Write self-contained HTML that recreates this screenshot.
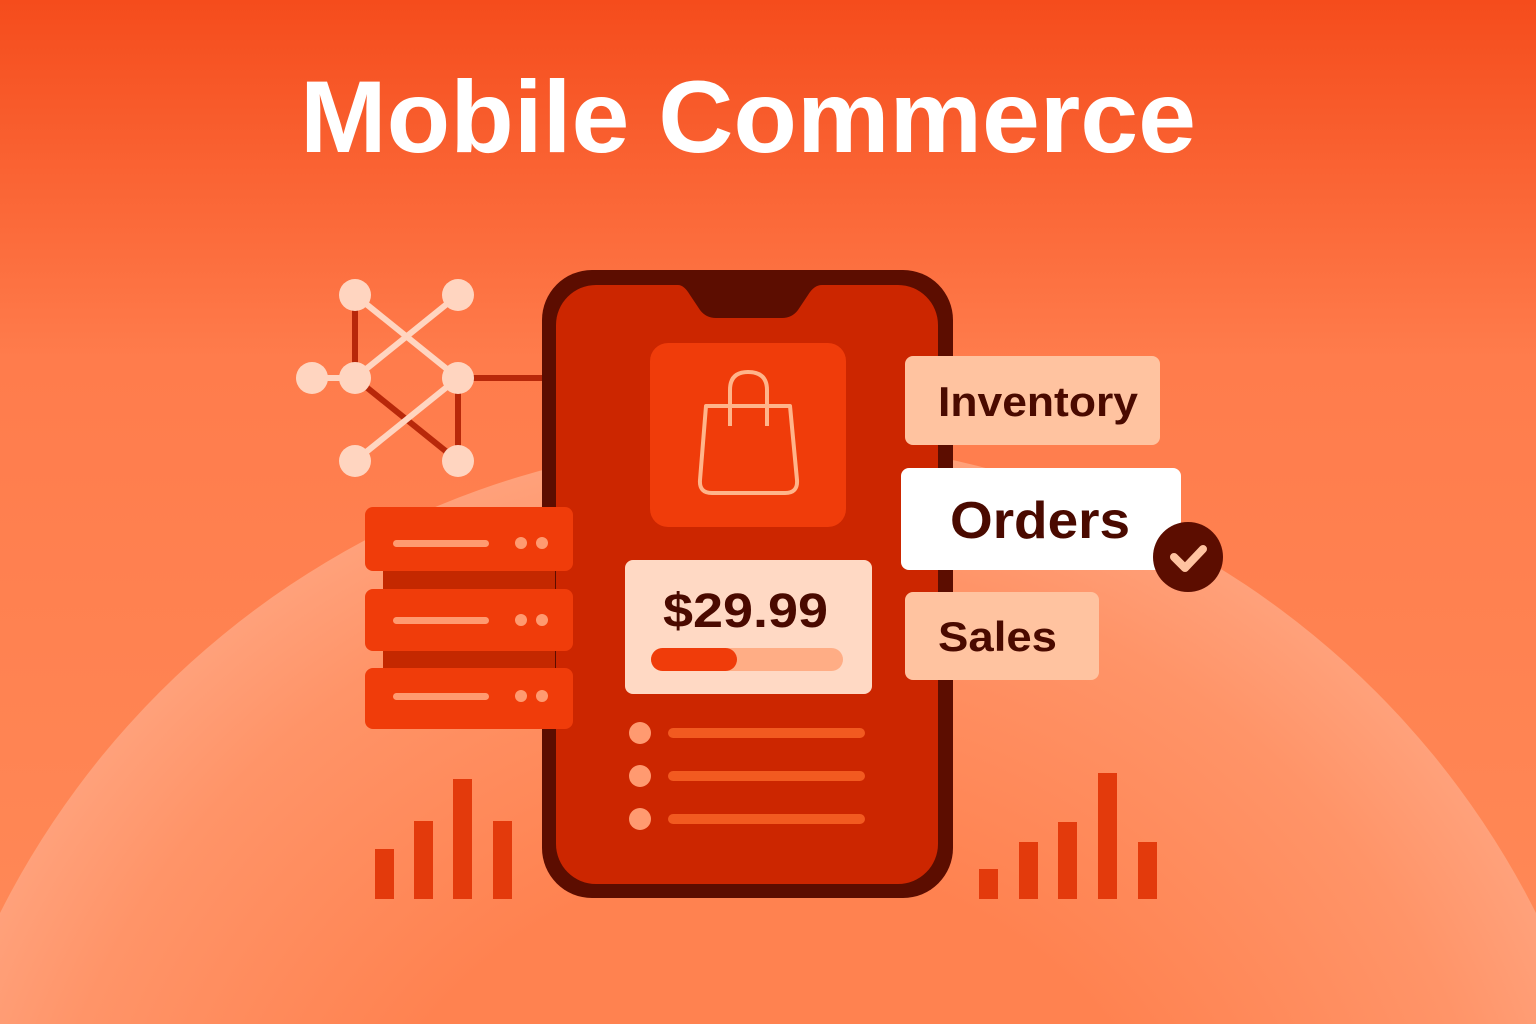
<!DOCTYPE html>
<html><head><meta charset="utf-8"><style>html,body{margin:0;padding:0;overflow:hidden;width:1536px;height:1024px}svg{display:block}</style></head>
<body>
<svg width="1536" height="1024" viewBox="0 0 1536 1024" xmlns="http://www.w3.org/2000/svg" font-family="Liberation Sans, sans-serif">
<defs>
<linearGradient id="bg" x1="0" y1="0" x2="0" y2="1">
<stop offset="0" stop-color="#f54c1c"/><stop offset="0.35" stop-color="#ff7c4c"/><stop offset="1" stop-color="#ff8a58"/>
</linearGradient>
<radialGradient id="arc" cx="768" cy="1300" r="870" gradientUnits="userSpaceOnUse">
<stop offset="0.5" stop-color="#ff8250"/><stop offset="0.85" stop-color="#ff9468"/><stop offset="1" stop-color="#ffa27c"/>
</radialGradient>
</defs>
<rect width="1536" height="1024" fill="url(#bg)"/>
<ellipse cx="768" cy="1300" rx="860" ry="860" fill="url(#arc)"/>
<text x="300" y="152" textLength="896" lengthAdjust="spacingAndGlyphs" font-size="102" font-weight="bold" fill="#fff">Mobile Commerce</text>

<!-- network -->
<g stroke-width="6">
<line x1="355" y1="295" x2="355" y2="378" stroke="#b8280a"/>
<line x1="355" y1="378" x2="458" y2="461" stroke="#b8280a"/>
<line x1="458" y1="378" x2="458" y2="461" stroke="#b8280a"/>
<line x1="458" y1="378" x2="545" y2="378" stroke="#b8280a"/>
<line x1="355" y1="295" x2="458" y2="378" stroke="#ffd5c0"/>
<line x1="458" y1="295" x2="355" y2="378" stroke="#ffd5c0"/>
<line x1="458" y1="378" x2="355" y2="461" stroke="#ffd5c0"/>
<line x1="312" y1="378" x2="355" y2="378" stroke="#ffd5c0"/>
</g>
<g fill="#ffd5c0">
<circle cx="355" cy="295" r="16"/><circle cx="458" cy="295" r="16"/><circle cx="312" cy="378" r="16"/><circle cx="355" cy="378" r="16"/><circle cx="458" cy="378" r="16"/><circle cx="355" cy="461" r="16"/><circle cx="458" cy="461" r="16"/>
</g>

<!-- phone -->
<rect x="542" y="270" width="411" height="628" rx="50" fill="#5c0d00"/>
<rect x="556" y="285" width="382" height="599" rx="40" fill="#cc2600"/>
<path d="M665 285 L678 285 Q684 285 690 295 L700 310 Q706 318 716 318 L782 318 Q792 318 798 310 L808 295 Q814 285 822 285 L835 285 Z" fill="#5c0d00"/>
<rect x="650" y="343" width="196" height="184" rx="18" fill="#f03c0a"/>
<g fill="none" stroke="#ffb48a" stroke-width="4" stroke-linejoin="round">
<path d="M706 406 L790 406 L797 480 Q798 493 785 493 L712 493 Q699 493 700 480 Z"/>
<path d="M730 426 L730 390 Q730 372 748 372 Q767 372 767 390 L767 426"/>
</g>
<rect x="625" y="560" width="247" height="134" rx="8" fill="#ffd9c4"/>
<text x="663" y="627" textLength="165" lengthAdjust="spacingAndGlyphs" font-size="48" font-weight="bold" fill="#4a0a00">$29.99</text>
<rect x="651" y="648" width="192" height="23" rx="11.5" fill="#ffad85"/>
<rect x="651" y="648" width="86" height="23" rx="11.5" fill="#f03c0a"/>
<g fill="#ff9a70"><circle cx="640" cy="733" r="11"/><circle cx="640" cy="776" r="11"/><circle cx="640" cy="819" r="11"/></g>
<g fill="#f25a20"><rect x="668" y="728" width="197" height="10" rx="5"/><rect x="668" y="771" width="197" height="10" rx="5"/><rect x="668" y="814" width="197" height="10" rx="5"/></g>

<!-- servers -->
<rect x="383" y="565" width="172" height="110" fill="#c42800"/>
<g fill="#f03c0a"><rect x="365" y="507" width="208" height="64" rx="8"/><rect x="365" y="589" width="208" height="62" rx="8"/><rect x="365" y="668" width="208" height="61" rx="8"/></g>
<g fill="#ff9a70">
<rect x="393" y="540" width="96" height="7" rx="3.5"/><circle cx="521" cy="543" r="6"/><circle cx="542" cy="543" r="6"/>
<rect x="393" y="617" width="96" height="7" rx="3.5"/><circle cx="521" cy="620" r="6"/><circle cx="542" cy="620" r="6"/>
<rect x="393" y="693" width="96" height="7" rx="3.5"/><circle cx="521" cy="696" r="6"/><circle cx="542" cy="696" r="6"/>
</g>

<!-- labels -->
<rect x="905" y="356" width="255" height="89" rx="8" fill="#ffc3a0"/>
<text x="938" y="416" textLength="200" lengthAdjust="spacingAndGlyphs" font-size="42" font-weight="bold" fill="#4a0a00">Inventory</text>
<rect x="901" y="468" width="280" height="102" rx="8" fill="#fff"/>
<text x="950" y="538" textLength="180" lengthAdjust="spacingAndGlyphs" font-size="52" font-weight="bold" fill="#4a0a00">Orders</text>
<circle cx="1188" cy="557" r="35" fill="#5c0d00"/>
<path d="M1174 557 L1185 568 L1203 549" fill="none" stroke="#ffc3a0" stroke-width="8" stroke-linecap="round" stroke-linejoin="round"/>
<rect x="905" y="592" width="194" height="88" rx="8" fill="#ffc3a0"/>
<text x="938" y="651" textLength="119" lengthAdjust="spacingAndGlyphs" font-size="42" font-weight="bold" fill="#4a0a00">Sales</text>

<!-- bars -->
<g fill="#e33a0c">
<rect x="375" y="849" width="19" height="50"/><rect x="414" y="821" width="19" height="78"/><rect x="453" y="779" width="19" height="120"/><rect x="493" y="821" width="19" height="78"/>
<rect x="979" y="869" width="19" height="30"/><rect x="1019" y="842" width="19" height="57"/><rect x="1058" y="822" width="19" height="77"/><rect x="1098" y="773" width="19" height="126"/><rect x="1138" y="842" width="19" height="57"/>
</g>
</svg>
</body></html>
